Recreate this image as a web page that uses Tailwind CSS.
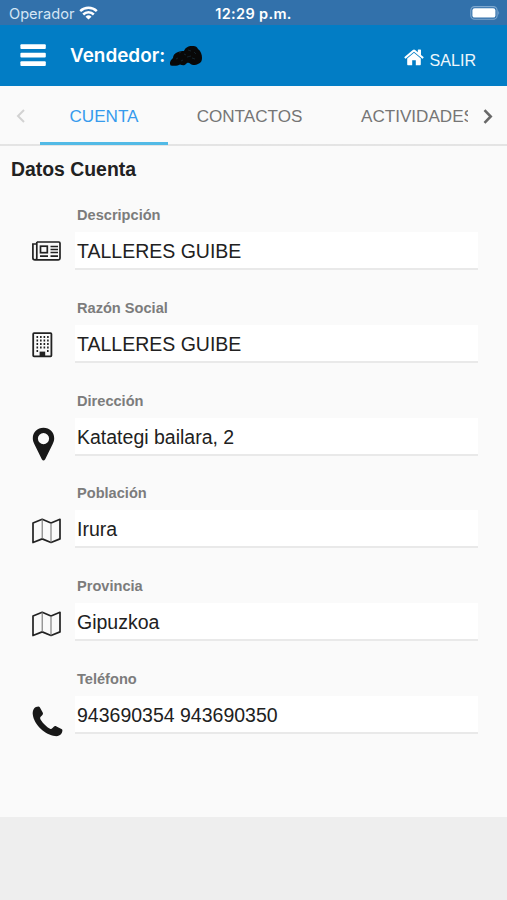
<!DOCTYPE html>
<html lang="es">
<head>
<meta charset="utf-8">
<meta name="viewport" content="width=device-width, initial-scale=1">
<title>Datos Cuenta</title>
<script src="https://cdn.jsdelivr.net/npm/@tailwindcss/browser@4"></script>
</head>
<body class="bg-[#eeeeee]">
<div class="flex h-[900px] w-[507px] flex-col overflow-hidden font-['Liberation_Sans',sans-serif] text-[#212121]">
  <div class="grid h-[25px] shrink-0 grid-cols-3 items-center bg-[#3271ab] pt-[2px] font-['Inter',sans-serif] text-white">
    <div class="flex items-center gap-[5px] pl-[9px]">
      <span class="text-[14.6px] leading-5 text-[#d5e6f5]">Operador</span>
      <svg class="-mt-[2px] h-[14px] w-[19px]" viewBox="0 0 19 14" fill="none" stroke="#fff" stroke-width="2.5"><path d="M1.2 5.2a12 12 0 0 1 16.6 0M4.2 8.5a7.6 7.6 0 0 1 10.6 0"/><path d="M9.5 13.6 6.5 10.7a4.4 4.4 0 0 1 6 0z" fill="#fff" stroke="none"/></svg>
    </div>
    <div class="text-center text-[14.5px] leading-5 font-semibold tracking-[0.35px] whitespace-nowrap">12:29 p.m.</div>
    <div class="-mt-[2px] flex justify-end pr-[6px]">
      <svg class="h-[14px] w-[31px]" viewBox="0 0 31 14"><rect x=".8" y=".6" width="26.3" height="12.6" rx="3.8" fill="none" stroke="#7fa8cf" stroke-width="1.1"/><rect x="2.4" y="2.2" width="23" height="9.4" rx="2.2" fill="#fff"/><path d="M28.3 4.6q1.8 2.3 0 4.6z" fill="#7fa8cf"/></svg>
    </div>
  </div>
  <header class="flex h-[61px] shrink-0 items-center bg-[#027dc5] pl-5 text-white">
    <svg class="h-[23px] w-[26px]" viewBox="0 0 26 23" fill="#fff"><rect x=".4" y=".3" width="25.4" height="4.6" rx="1"/><rect x=".4" y="8.8" width="25.4" height="4.6" rx="1"/><rect x=".4" y="17.3" width="25.4" height="4.6" rx="1"/></svg>
    <h1 class="ml-[24px] font-['Inter',sans-serif] text-[18.9px] leading-6 font-semibold">Vendedor:</h1>
    <svg class="ml-[4px] h-[22px] w-[34px]" viewBox="0 0 34 22" fill="#080808"><path d="M1.500 20C0 18 2 14.500 4 13c0-3 2-5 5-6 2-1 4-1 6-1 1-3 4-5 8-5 3-.500 5 .500 6 3 3 2 4 6 4 9 0 3-1 5-4 6-3 2-6 1-8-.500-1-1-3-1-4 .500-2 2-4 1-6 .500-2 1.500-6 1.500-9.500 1z"/><path d="M7 14l2-1m3 3 2-1m1-6 2 1m2-5 3 1m-4 6 4-1m3-4 2 2m-4 4 3 1m-16-6 2-1" fill="none" stroke="#1d3545" stroke-width=".6"/></svg>
    <div class="mt-[8px] mr-[31px] ml-auto flex items-center gap-[5px]">
      <svg class="-mt-[4px] h-[17px] w-5" viewBox="0 0 20 17" fill="#fff"><path d="M10 3.8 3.2 9.4v5.9c0 .6.4 1 1 1h4v-5h3.6v5h4c.6 0 1-.4 1-1V9.4z"/><path d="M19.5 8 17 5.9V1.2a.6.6 0 0 0-.6-.6h-2a.6.6 0 0 0-.6.6v2L11.2 1a1.9 1.9 0 0 0-2.4 0L.5 8a.5.5 0 0 0 0 .7l.7.8q.3.3.7 0L10 2.8l8.1 6.7q.4.3.7 0l.7-.8q.3-.4 0-.7z"/></svg>
      <span class="pt-px text-[16.1px] leading-5 text-[#eef7fc]">SALIR</span>
    </div>
  </header>
  <main class="h-[731px] shrink-0 bg-[#fafafa]">
    <nav class="flex h-[60px] bg-linear-to-b from-transparent from-[58.5px] to-[#e4e4e4] to-[58.5px] text-[17.1px] text-[#757575]">
      <button class="flex w-10 shrink-0 items-center justify-center"><svg class="h-[14px] w-[9px]" viewBox="0 0 9 14" fill="none" stroke="#d2d2d2" stroke-width="2"><path d="M8 1 2 7l6 6"/></svg></button>
      <div class="flex w-[428px] shrink-0 overflow-hidden whitespace-nowrap">
        <div class="relative flex w-32 shrink-0 items-center justify-center pt-px text-[#369bed]">CUENTA<span class="absolute bottom-px left-0 h-[3px] w-full bg-[#52bae6]"></span></div>
        <div class="flex w-[163px] shrink-0 items-center justify-center pt-px">CONTACTOS</div>
        <div class="flex w-[176px] shrink-0 items-center pt-px pl-[30px]">ACTIVIDADES</div>
      </div>
      <button class="flex w-[39px] shrink-0 items-center justify-center"><svg class="h-[15px] w-[10px]" viewBox="0 0 10 15" fill="none" stroke="#686868" stroke-width="2.6"><path d="m1.5 1.2 6.2 6.3-6.2 6.3"/></svg></button>
    </nav>
    <h2 class="pt-[11px] pl-[11px] text-[19.4px] leading-6 font-bold">Datos Cuenta</h2>
    <section class="pt-[24px] pr-[29px] pl-8">
      <div class="grid h-[92.8px] grid-cols-[43px_1fr]">
        <svg class="mt-[36px] h-[20px] w-[29px]" viewBox="0 0 29 20" fill="none" stroke="#222" stroke-width="1.7"><path d="M4.8 1h22q1.2 0 1.2 1.2v15q0 1.6-1.6 1.6H3Q.9 18.8.9 17V3h3.900v14q0 1.8-1.6 1.8M4.8 1v16M18.5 5.5H26M18.5 8.5H26M18.5 11.5H26M8 15.1h8M18.5 15.1H26"/><rect x="8.5" y="5.2" width="6.8" height="6.5"/></svg>
        <label><span class="block pl-[2px] text-[14.6px] leading-5 font-bold text-[#7c7c7c]">Descripción</span><span class="mt-[7px] block h-[38px] border-b-2 border-[#e9e9e9] bg-white pl-[2px] text-[19.5px] leading-[38px]">TALLERES GUIBE</span></label>
      </div>
      <div class="grid h-[92.8px] grid-cols-[43px_1fr]">
        <svg class="mt-[34px] h-[26px] w-[21px]" viewBox="0 0 21 26" fill="none" stroke="#222"><rect x="1.2" y="1.2" width="18.2" height="23.2" rx=".8" stroke-width="1.8"/><path d="M4.5 5h12.2M4.5 8.5h12.2M4.5 12h12.2M4.5 15.5h12.2" stroke-width="1.8" stroke-dasharray="1.6 1.93"/><path d="M4.5 19h1.6M15 19h1.6" stroke-width="1.8"/><path d="M7.6 19.6h5.6v5H7.6z" fill="#222" stroke="none"/></svg>
        <label><span class="block pl-[2px] text-[14.6px] leading-5 font-bold text-[#7c7c7c]">Razón Social</span><span class="mt-[7px] block h-[38px] border-b-2 border-[#e9e9e9] bg-white pl-[2px] text-[19.5px] leading-[38px]">TALLERES GUIBE</span></label>
      </div>
      <div class="grid h-[92.8px] grid-cols-[43px_1fr]">
        <svg class="mt-[36px] h-[34px] w-[23px]" viewBox="0 0 23 34" fill="#181818"><path fill-rule="evenodd" d="M11.5.8C5.4.8.8 5.4.8 11.3c0 2.2.6 3.7 1.5 5.6L9.8 32.2q1.7 2.6 3.4 0l7.5-15.3c.9-1.9 1.5-3.4 1.5-5.6C22.2 5.4 17.6.8 11.5.8zm0 5.2a5.6 5.6 0 1 1 0 11.2 5.6 5.6 0 0 1 0-11.2z"/></svg>
        <label><span class="block pl-[2px] text-[14.6px] leading-5 font-bold text-[#7c7c7c]">Dirección</span><span class="mt-[7px] block h-[38px] border-b-2 border-[#e9e9e9] bg-white pl-[2px] text-[19.5px] leading-[38px]">Katategi bailara, 2</span></label>
      </div>
      <div class="grid h-[92.8px] grid-cols-[43px_1fr]">
        <svg class="mt-[35px] h-[26px] w-[29px]" viewBox="0 0 29 26" fill="none" stroke="#222" stroke-width="1.7" stroke-linejoin="round"><path d="M1 5 10.2 1.3 19 5l9-3.7v19.6l-9 3.6-8.8-3.6L1 24.5z"/><path d="M10.2 1.3v19.6M19 5v19.5" stroke="#777" stroke-width="1.1"/></svg>
        <label><span class="block pl-[2px] text-[14.6px] leading-5 font-bold text-[#7c7c7c]">Población</span><span class="mt-[7px] block h-[38px] border-b-2 border-[#e9e9e9] bg-white pl-[2px] text-[19.5px] leading-[38px]">Irura</span></label>
      </div>
      <div class="grid h-[92.8px] grid-cols-[43px_1fr]">
        <svg class="mt-[35px] h-[26px] w-[29px]" viewBox="0 0 29 26" fill="none" stroke="#222" stroke-width="1.7" stroke-linejoin="round"><path d="M1 5 10.2 1.3 19 5l9-3.7v19.6l-9 3.6-8.8-3.6L1 24.5z"/><path d="M10.2 1.3v19.6M19 5v19.5" stroke="#777" stroke-width="1.1"/></svg>
        <label><span class="block pl-[2px] text-[14.6px] leading-5 font-bold text-[#7c7c7c]">Provincia</span><span class="mt-[7px] block h-[38px] border-b-2 border-[#e9e9e9] bg-white pl-[2px] text-[19.5px] leading-[38px]">Gipuzkoa</span></label>
      </div>
      <div class="grid h-[92.8px] grid-cols-[43px_1fr]">
        <svg class="mt-[37px] h-[31px] w-[31px]" viewBox="0 0 31 31" fill="#181818"><path d="M4 .9C6 .2 7.2.2 7.8 1.2l2.9 5.4c.6 1.2.2 2.1-.7 3-1.3 1.2-2.1 1.7-1.8 3 .6 2.5 6.9 9.5 10.3 10.3 1.3.3 1.8-.5 3-1.8.9-.9 1.8-1.3 3-.7l5 2.7c1.2.7 1.1 1.7.5 3.3-1.1 2.9-4.2 4-7 3.7C13.6 29.4 1.7 18.5.8 8.6.5 5.7 1.2 2.1 4 .9z"/></svg>
        <label><span class="block pl-[2px] text-[14.6px] leading-5 font-bold text-[#7c7c7c]">Teléfono</span><span class="mt-[7px] block h-[38px] border-b-2 border-[#e9e9e9] bg-white pl-[2px] text-[19.5px] leading-[38px]">943690354 943690350</span></label>
      </div>
    </section>
  </main>
</div>
</body>
</html>
